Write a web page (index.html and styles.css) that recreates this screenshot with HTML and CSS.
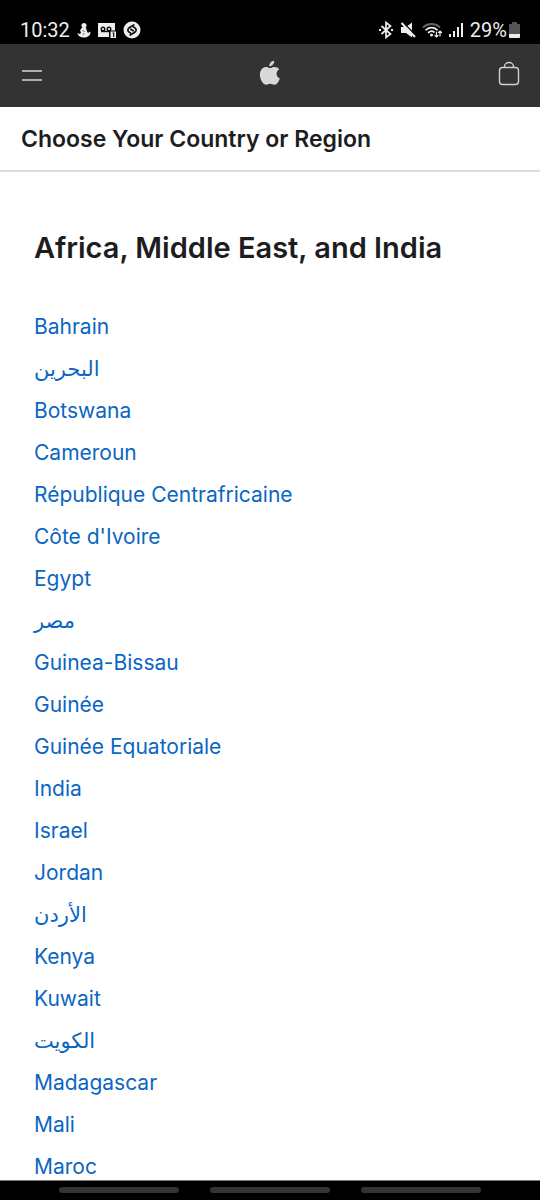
FILE: index.html
```html
<!DOCTYPE html>
<html lang="en">
<head>
<meta charset="utf-8">
<meta name="viewport" content="width=device-width, initial-scale=1">
<title>Choose Your Country or Region</title>
<link rel="stylesheet" href="styles.css">
</head>
<body>
<div class="status">
  <div class="status-group status-left">
    <span class="clock">10:32</span>
    <svg width="14" height="18" viewBox="0 0 14 18" fill="#eee" aria-hidden="true"><circle cx="7" cy="4.500" r="2.500"/><path d="M5 6.500h4l.8 3.500 1.200 2 2.300-1.500c.7 3.500-2.300 6-6.300 6C3.500 16.500 1 15 .5 12l2.500 1 1-1.500L3 9.500z"/><path d="M5.500 9.500l2 1M5.500 13.500l2-1" stroke="#555" stroke-width="1"/></svg>
    <svg width="18" height="18" viewBox="0 0 18 18" aria-hidden="true"><path d="M0 2h17v14H0z" fill="#eee"/><g fill="none" stroke="#111" stroke-width="1.400"><circle cx="5" cy="8" r="1.800"/><circle cx="11" cy="8" r="1.800"/><path d="M3 10.500h9"/></g><path d="M11 9.500h7V18h-7z" fill="#000"/><path d="M12.500 10.500H18V17h-5.500z" fill="#eee"/><path d="M14.500 12h1.200v4" fill="none" stroke="#111" stroke-width="1.200"/></svg>
    <svg width="18" height="18" viewBox="0 0 18 18" aria-hidden="true"><circle cx="9" cy="9" r="8.500" fill="#eee"/><path d="M10.800 4L6.500 6.500C4.300 8 4.500 10 6 11l1.500.9M7.200 14l4.300-2.500c2.200-1.500 2-3.500.5-4.500l-1.500-.9M7.800 8.200l2.400 1.600" fill="none" stroke="#111" stroke-width="1.700" stroke-linecap="round"/></svg>
  </div>
  <div class="status-group status-right">
    <svg width="16" height="18" viewBox="0 0 16 18" fill="none" stroke="#eee" stroke-width="1.700" aria-hidden="true"><path d="M3.500 5l9 8L8 16.500v-15L12.500 5l-9 8"/><path d="M1 9h2M13 9h2" stroke-width="2"/></svg>
    <svg width="16" height="18" viewBox="0 0 16 18" aria-hidden="true"><path d="M1 6h5l6-4.500v15L6 12H1z" fill="#eee"/><path d="M3 1.500L16 14.500" stroke="#000" stroke-width="1.500"/><path d="M1.500 2L15 16" stroke="#eee" stroke-width="2"/></svg>
    <svg width="21" height="18" viewBox="0 0 21 18" fill="none" stroke-linecap="round" aria-hidden="true"><path d="M1.500 6c4.500-4 11.500-4 16 0" stroke="#666" stroke-width="1.800"/><path d="M4 8.800c3.300-2.800 8-2.800 11 0M6.500 11.500c2-1.600 4-1.600 5.500-.5" stroke="#eee" stroke-width="1.700"/><circle cx="9.500" cy="14" r="1.500" fill="#eee"/><path d="M14.500 11v5m-1.500-1.500l1.500 1.500 1.500-1.500M18 15v-5m-1.500 1.500L18 10l1.500 1.500" stroke="#eee" stroke-width="1.200"/></svg>
    <svg width="15" height="18" viewBox="0 0 15 18" fill="#eee" aria-hidden="true"><path d="M0 13h2v3H0zM4 10h2v6H4zM8 6h2v10H8zM12 2h2v14h-2z"/></svg>
    <span class="battery-text">29%</span>
    <svg width="11" height="18" viewBox="0 0 11 18" aria-hidden="true"><path d="M3 1h5v2h2q1 0 1 1v9H0V4q0-1 1-1h2z" fill="#555"/><path d="M0 13h11v3q0 1-1 1H1q-1 0-1-1z" fill="#eee"/></svg>
  </div>
</div>
<header class="globalnav">
  <button class="nav-button" type="button" aria-label="Menu"><svg width="22" height="14" viewBox="0 0 22 14" aria-hidden="true"><path d="M1 2h20M1 11h20" stroke="#d8d8d8" stroke-width="1.500"/></svg></button>
  <a class="logo" href="#" aria-label="Apple"><svg width="22" height="26" viewBox="0 0 22 26" fill="#d8d8d8" aria-hidden="true"><path d="M15.200.8c.2 3-2.200 5.600-4.900 5.500C10 3.600 12.500 1 15.200.8z"/><path d="M20.300 9.200c-4 2.400-3.400 7.600.6 9.200-.8 2.400-2.600 5.300-4.300 6.100-2 .8-3.400-.7-5.400-.7s-3.200 1.400-5 .7C3.300 23.500.9 18.700.9 14.700c0-6 4.700-8.500 8-7.300 1.900.7 2.500.7 4.200 0 2.500-1 5.400-.4 7.200 1.800z"/></svg></a>
  <button class="nav-button" type="button" aria-label="Shopping bag"><svg width="22" height="26" viewBox="0 0 22 26" fill="none" stroke="#d0d0d0" stroke-width="1.400" aria-hidden="true"><rect x="1.500" y="7.500" width="19" height="17" rx="3"/><path d="M6.500 7V6.500a4.500 4 0 0 1 9 0V7"/></svg></button>
</header>
<div class="localnav"><h1 class="page-title">Choose Your Country or Region</h1></div>
<main class="content">
  <h2 class="region-title">Africa, Middle East, and India</h2>
  <ul class="countries">
    <li><a href="#">Bahrain</a></li>
    <li><a href="#" lang="ar">البحرين</a></li>
    <li><a href="#">Botswana</a></li>
    <li><a href="#">Cameroun</a></li>
    <li><a href="#">République Centrafricaine</a></li>
    <li><a href="#">Côte d'Ivoire</a></li>
    <li><a href="#">Egypt</a></li>
    <li><a href="#" lang="ar">مصر</a></li>
    <li><a href="#">Guinea-Bissau</a></li>
    <li><a href="#">Guinée</a></li>
    <li><a href="#">Guinée Equatoriale</a></li>
    <li><a href="#">India</a></li>
    <li><a href="#">Israel</a></li>
    <li><a href="#">Jordan</a></li>
    <li><a href="#" lang="ar">الأردن</a></li>
    <li><a href="#">Kenya</a></li>
    <li><a href="#">Kuwait</a></li>
    <li><a href="#" lang="ar">الكويت</a></li>
    <li><a href="#">Madagascar</a></li>
    <li><a href="#">Mali</a></li>
    <li><a href="#">Maroc</a></li>
  </ul>
</main>
<div class="gesture-bar"><span class="handle"></span><span class="handle"></span><span class="handle"></span></div>
</body>
</html>
```
FILE: styles.css
```css
* { box-sizing: border-box; }
body {
  margin: 0;
  height: 100vh;
  display: flex;
  flex-direction: column;
  background: #fff;
  color: #1d1d1f;
  font-family: Inter, "DejaVu Sans", sans-serif;
}
svg { display: block; flex: none; }
.status {
  flex: none;
  display: flex;
  justify-content: space-between;
  padding: 17px 20px 0;
  height: 44px;
  background: #000;
  color: #eee;
  font: 20px/26px Roboto, sans-serif;
}
.status-group { display: flex; align-items: center; height: 26px; }
.status-left { gap: 7px; }
.status-right { gap: 6px; }
.battery-text { margin-right: -4px; }
.globalnav {
  flex: none;
  display: grid;
  grid-template-columns: 1fr auto 1fr;
  align-items: center;
  height: 63px;
  padding: 0 20px 6px 19px;
  background: #333;
}
.nav-button { border: 0; padding: 0; background: none; cursor: pointer; }
.nav-button:first-child { justify-self: start; padding: 6px 0 0 2px; }
.nav-button:last-child { justify-self: end; }
.localnav {
  flex: none;
  padding: 16px 21px 15px;
  border-bottom: 2px solid #dcdcdd;
}
.page-title { margin: 0; font-size: 23px; line-height: 32px; font-weight: 600; }
.content { flex: 1; min-height: 0; overflow: hidden; padding: 56px 34px 0; }
.region-title { margin: 0; font-size: 29px; line-height: 40px; font-weight: 600; }
.countries { list-style: none; margin: 38px 0 0; padding: 0; }
.countries li { height: 42px; font-size: 21px; line-height: 42px; }
.countries a { color: #0b66c3; text-decoration: none; }
.gesture-bar {
  flex: none;
  display: flex;
  justify-content: space-between;
  height: 20px;
  padding: 6px 59px 0;
  border-top: 1px solid #777;
  background: #000;
}
.handle { width: 120px; height: 6px; border-radius: 3px; background: #333; }
```
